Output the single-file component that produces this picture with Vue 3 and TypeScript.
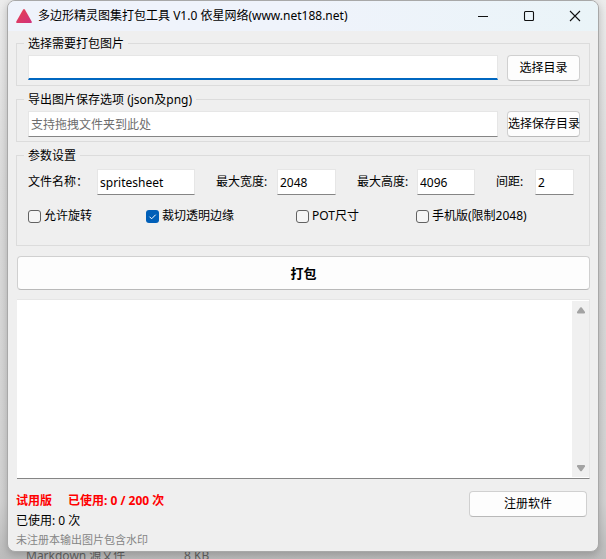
<script setup lang="ts">
import { ref } from 'vue'

interface Field {
  label: string
  value: string
  cls: string
}
interface Option {
  label: string
  latin: string
  tail: string
  checked: boolean
  cls: string
}

const source = ref('')
const target = ref('')
const fields = ref<Field[]>([
  { label: '文件名称：', value: 'spritesheet', cls: 'f-name' },
  { label: '最大宽度:', value: '2048', cls: 'f-width' },
  { label: '最大高度:', value: '4096', cls: 'f-height' },
  { label: '间距:', value: '2', cls: 'f-gap' },
])
const options = ref<Option[]>([
  { label: '允许旋转', latin: '', tail: '', checked: false, cls: 'o-rotate' },
  { label: '裁切透明边缘', latin: '', tail: '', checked: true, cls: 'o-trim' },
  { label: '', latin: 'POT', tail: '尺寸', checked: false, cls: 'o-pot' },
  { label: '手机版(限制', latin: '2048)', tail: '', checked: false, cls: 'o-mobile' },
])
</script>

<template>
  <div class="desktop">
    <div class="behind-top"><i class="frag f1"></i><i class="frag f2"></i></div>
    <div class="behind-row"><span class="kind">Markdown 源文件</span><span>8 KB</span></div>
    <main class="window">
      <header class="titlebar">
        <svg class="logo" width="16" height="14" viewBox="0 0 16 14">
          <defs>
            <linearGradient id="lg" x1="0" y1="0" x2="1" y2="1">
              <stop offset="0" stop-color="#e8434f" />
              <stop offset="1" stop-color="#d0317c" />
            </linearGradient>
          </defs>
          <path d="M7 .7Q8 -.5 9 .7L15.7 12.4Q16.2 14 15 14H1Q-.2 14 .3 12.4Z" fill="url(#lg)" />
        </svg>
        <h1>多边形精灵图集打包工具 <span class="ver">V1.0</span> 依星网络<span class="url">(www.net188.net)</span></h1>
        <div class="controls">
          <svg width="12" height="12" viewBox="0 0 12 12"><path d="M1 6.5H11" /></svg>
          <svg width="12" height="12" viewBox="0 0 12 12"><rect x="1.5" y="1.5" width="9" height="9" rx="1" /></svg>
          <svg width="12" height="12" viewBox="0 0 12 12"><path d="M1 1L11 11M11 1L1 11" /></svg>
        </div>
      </header>

      <div class="body">
        <section class="group">
          <div class="legend">选择需要打包图片</div>
          <div class="pick">
            <input v-model="source" class="box focus" type="text" />
            <button class="btn">选择目录</button>
          </div>
        </section>

        <section class="group">
          <div class="legend">导出图片保存选项 <span class="paren">(json及png)</span></div>
          <div class="pick">
            <input v-model="target" class="box" type="text" placeholder="支持拖拽文件夹到此处" />
            <button class="btn">选择保存目录</button>
          </div>
        </section>

        <section class="group params">
          <div class="legend">参数设置</div>
          <div class="fields">
            <template v-for="f in fields" :key="f.cls">
              <label :class="f.cls">{{ f.label }}</label>
              <input v-model="f.value" class="box" type="text" />
            </template>
          </div>
          <div class="options">
            <label v-for="o in options" :key="o.cls" :class="o.cls">
              <span class="check" :class="{ on: o.checked }">
                <svg v-if="o.checked" width="13" height="13" viewBox="0 0 13 13"><path d="M3.5 6.7L5.6 8.8L9.7 4.7" /></svg>
              </span>
              <span class="text">{{ o.label }}<span class="num">{{ o.latin }}</span>{{ o.tail }}</span>
            </label>
          </div>
        </section>

        <button class="btn pack">打包</button>

        <div class="log">
          <div class="log-text"></div>
          <div class="scroll">
            <svg width="8" height="7" viewBox="0 0 8 7"><path d="M3.2 .6Q4 -.2 4.8 .6L8 5Q8.3 6.5 7.2 6.5H.8Q-.3 6.5 0 5Z" /></svg>
            <svg width="8" height="7" viewBox="0 0 8 7"><path d="M3.2 5.9Q4 6.7 4.8 5.9L8 1.5Q8.3 0 7.2 0H.8Q-.3 0 0 1.5Z" /></svg>
          </div>
        </div>

        <footer class="footer">
          <div class="status">
            <p class="trial"><span class="edition">试用版</span><span>已使用<span class="bold-num">: 0 / 200 </span>次</span></p>
            <p class="used">已使用: 0 次</p>
            <p class="note">未注册本输出图片包含水印</p>
          </div>
          <button class="btn register">注册软件</button>
        </footer>
      </div>
    </main>
  </div>
</template>

<style>
body {
  overflow: hidden;
}
</style>

<style scoped>
* {
  box-sizing: border-box;
}
.desktop {
  position: relative;
  width: 606px;
  height: 559px;
  overflow: hidden;
  background: linear-gradient(180deg, #ececec 0, #dcdcdc 180px, #d3d3d3 500px, #bcbcbc 559px);
  font: 12px/16px "Noto Sans", "Noto Sans CJK SC", sans-serif;
  color: #000;
}
.behind-top {
  position: absolute;
  left: 25px;
  top: 0;
  height: 1px;
  display: flex;
  gap: 8px;
}
.frag {
  height: 1px;
  background: #777;
}
.f1 {
  width: 20px;
}
.f2 {
  width: 16px;
}
.behind-row {
  position: absolute;
  left: 26px;
  top: 548px;
  display: flex;
  color: #626262;
}
.kind {
  width: 158px;
}
.window {
  position: absolute;
  left: 7px;
  top: 0;
  width: 592px;
  height: 552px;
  border: 1px solid #a8a8a8;
  border-radius: 8px;
  background: #efefef;
  overflow: hidden;
  box-shadow: 0 3px 9px rgba(0, 0, 0, 0.22);
}
.titlebar {
  display: flex;
  align-items: center;
  height: 30px;
  padding: 0 17px 0 8px;
  background: linear-gradient(90deg, #eff3fb 0 50%, #eaf4f8);
}
.logo {
  margin-top: -1px;
}
h1 {
  margin: 0 0 0 6px;
  font-size: 12px;
  font-weight: 400;
  white-space: pre;
}
.controls {
  display: flex;
  gap: 34px;
  margin-left: auto;
}
.controls svg {
  fill: none;
  stroke: #111;
  stroke-width: 1.1;
}
.body {
  display: flex;
  flex-direction: column;
  padding: 12px 8px 0;
}
.group {
  height: 43px;
  margin-bottom: 13px;
  padding: 0 9px 0 11px;
  border: 1px solid #dcdcdc;
}
.legend {
  width: max-content;
  height: 16px;
  margin: -8px 0 0 -4px;
  padding: 0 4px;
  background: #efefef;
  white-space: pre;
}
.pick {
  display: flex;
  gap: 9px;
  margin-top: 3px;
}
.box {
  height: 26px;
  min-width: 0;
  padding: 0 2px;
  border: 1px solid #e6e6e6;
  border-bottom-color: #858585;
  border-radius: 0;
  outline: none;
  background: #fff;
  font: inherit;
  color: #000;
}
.pick .box {
  flex: 1;
}
.box.focus {
  height: 25px;
  border-bottom: 2px solid #0067c0;
}
.box::placeholder {
  color: #6d6d6d;
  opacity: 1;
}
.btn {
  height: 26px;
  width: 73px;
  padding: 0;
  border: 1px solid #d0d0d0;
  border-bottom-color: #b9b9b9;
  border-radius: 4px;
  background: #fdfdfd;
  font: inherit;
  color: #000;
  white-space: nowrap;
}
.group.params {
  height: 91px;
  margin-bottom: 10px;
}
.fields {
  display: grid;
  grid-template-columns: 69px 98px 82px 59px 81px 58px 60px 39px;
  align-items: center;
  margin-top: 5px;
}
.fields label {
  white-space: nowrap;
}
.f-width,
.f-height,
.f-gap {
  padding-left: 21px;
}
.options {
  display: grid;
  grid-template-columns: 118px 150px 120px 1fr;
  margin-top: 13px;
}
.options label {
  display: flex;
  align-items: center;
  gap: 3px;
  white-space: nowrap;
}
.check {
  width: 13px;
  height: 13px;
  border: 1px solid #626262;
  border-radius: 3px;
  background: #f5f5f5;
}
.check.on {
  border: 0;
  background: #005fb8;
}
.check svg {
  display: block;
  fill: none;
  stroke: #fff;
}
.btn.pack {
  width: 573px;
  height: 34px;
  margin-left: 1px;
  font-size: 13px;
  font-weight: 700;
}
.log {
  display: flex;
  width: 573px;
  height: 180px;
  margin: 9px 0 0 1px;
  padding: 1px 0 1px;
  border: 1px solid #e6e6e6;
  border-left: 0;
  border-bottom-color: #858585;
  background: #fff;
}
.log-text {
  flex: 1;
}
.scroll {
  display: flex;
  flex-direction: column;
  align-items: center;
  justify-content: space-between;
  width: 17px;
  padding: 6px 0 5px;
  background: #f0f0f0;
}
.scroll svg {
  fill: #a3a3a3;
}
.footer {
  display: flex;
  justify-content: space-between;
  padding: 12px 3px 0 0;
}
.status p {
  margin: 0;
  line-height: 20px;
  white-space: pre;
}
.status .trial {
  display: flex;
  gap: 16px;
  color: #f00;
  font-weight: 700;
}
.status .note {
  font-size: 11px;
  line-height: 18px;
  color: #858585;
}
.btn.register {
  width: 118px;
}
</style>
